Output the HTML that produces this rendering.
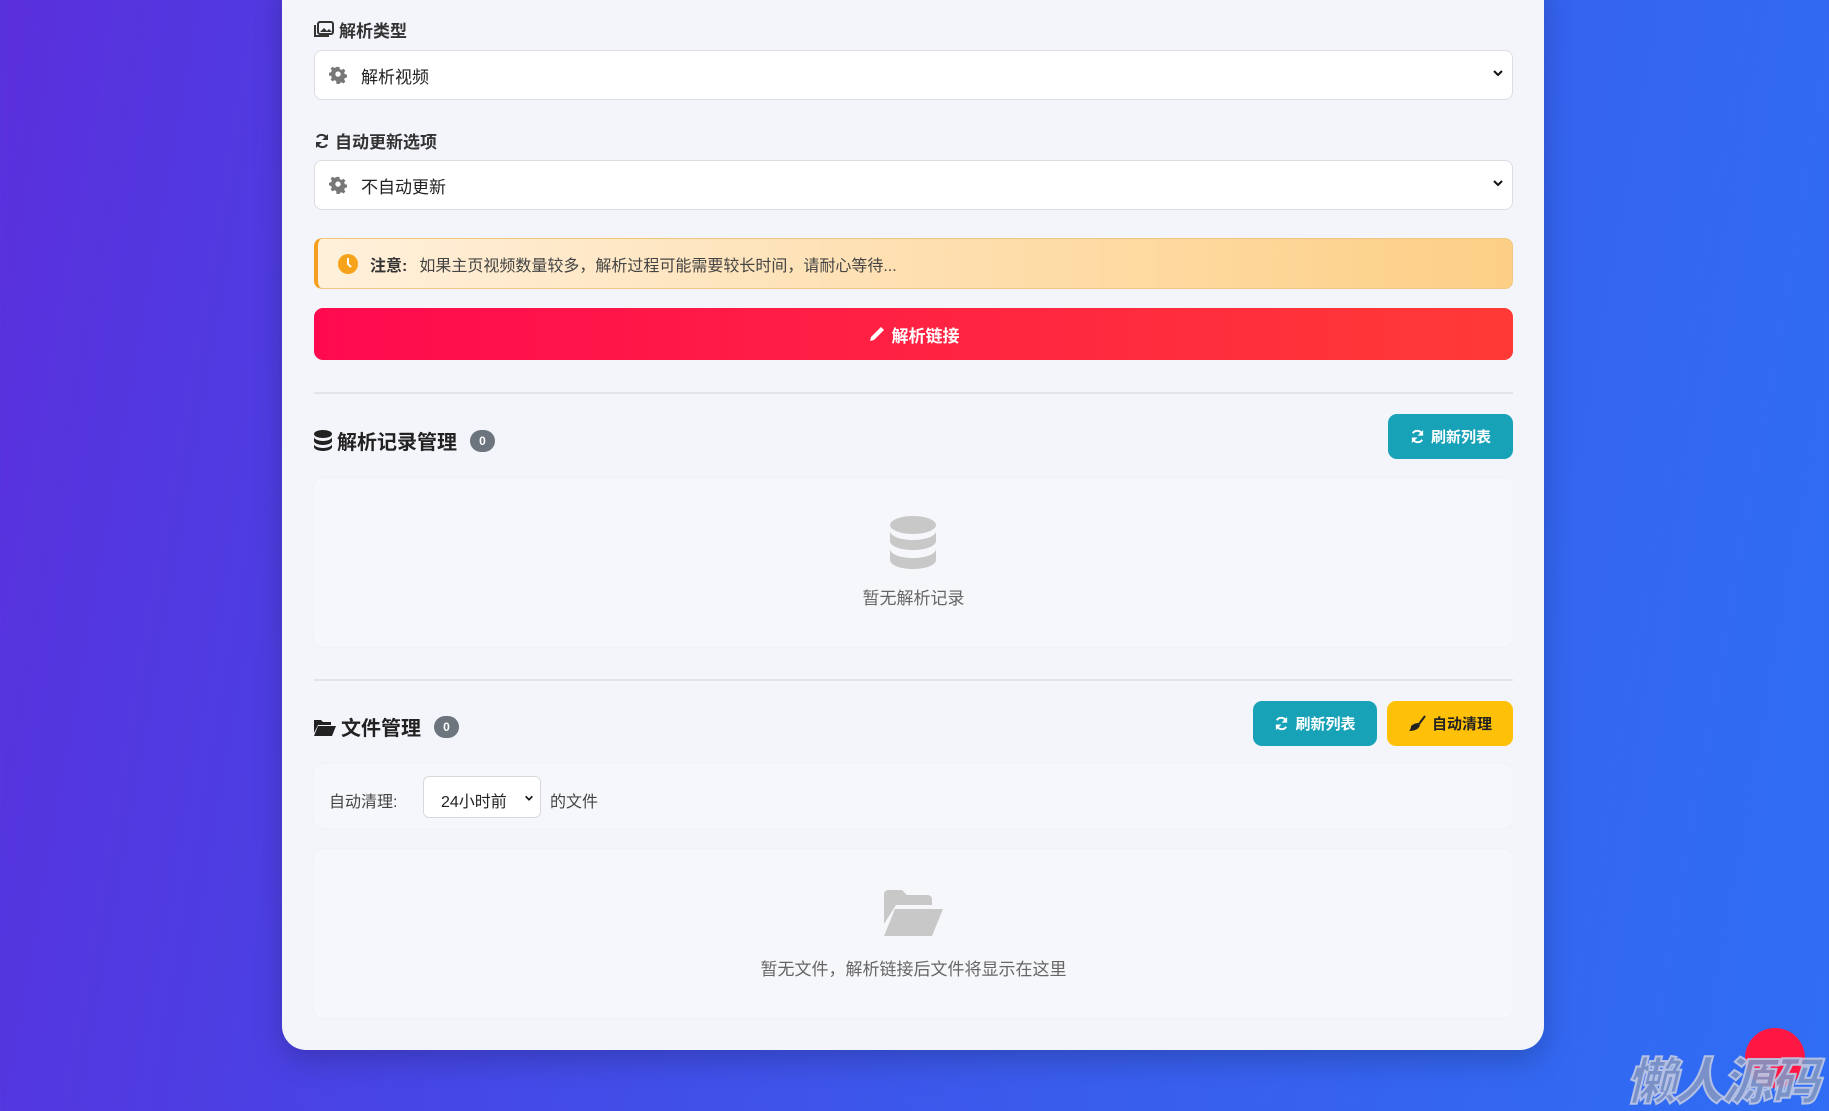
<!DOCTYPE html>
<html><head><meta charset="utf-8"><style>
*{box-sizing:border-box;margin:0;padding:0}
html,body{width:1829px;height:1111px;overflow:hidden}
body{font-family:"Liberation Sans","Noto Sans CJK SC",sans-serif;background:linear-gradient(100deg,#5a2fdc 0%,#4646e6 30%,#3a5bec 60%,#2f6ef4 100%);position:relative;color:#333}
.card{position:absolute;left:282px;top:-30px;width:1262px;height:1080px;background:#f4f5fb;border-radius:24px;box-shadow:0 10px 30px rgba(0,0,0,.2)}
.a{position:absolute}
.lbl{font-size:17px;font-weight:bold;color:#333;display:flex;align-items:center;gap:5px;left:314px}
.sel{left:314px;width:1199px;height:50px;background:#fff;border:1px solid #dcdde3;border-radius:8px;display:flex;align-items:center;padding-left:14px;font-size:17px;color:#222}
.sel .chev{position:absolute;right:8px;top:16px}
.notice{left:314px;top:238px;width:1199px;height:51px;border-radius:8px;border:1px solid #f0c680;border-left:4px solid #f5a020;background:linear-gradient(90deg,#fff0db,#fdcf86);display:flex;align-items:center;padding-left:20px;font-size:16px;color:#444}
.btn{left:314px;top:308px;width:1199px;height:52px;border-radius:9px;background:linear-gradient(90deg,#ff0a4f,#ff3a36);color:#fff;font-weight:bold;font-size:17px;display:flex;align-items:center;justify-content:center;gap:6px}
.hr{left:314px;width:1199px;height:2px;background:#e3e4ea}
.h{left:314px;font-size:20px;font-weight:bold;color:#222;display:flex;align-items:center;gap:5px}
.badge{display:inline-block;background:#6c757d;color:#fff;font-size:12px;border-radius:12px;width:25px;height:22px;text-align:center;line-height:22px;margin-left:8px}
.b2{height:45px;border-radius:9px;display:flex;align-items:center;justify-content:center;gap:6px;font-size:15px;font-weight:bold}
.teal{background:#17a2b8;color:#fff}
.yel{background:#ffc107;color:#222}
.box{left:314px;width:1199px;background:#f6f7fb;border-radius:10px;box-shadow:0 0 4px rgba(0,0,0,.03)}
.empty{text-align:center;color:#666;font-size:17px}
</style></head><body>
<div class="card"></div>

<div class="a lbl" style="top:17px"><svg width="20" height="17" viewBox="0 0 20 17"><rect x="4" y="1" width="15" height="12" rx="2" fill="none" stroke="#333" stroke-width="2"/><path d="M1 4v11h14" fill="none" stroke="#333" stroke-width="2"/><path d="M6 11l4-4 3 3 2-2 3 3z" fill="#333"/></svg>解析类型</div>
<div class="a sel" style="top:50px"><svg width="18" height="18" viewBox="0 0 20 20"><path fill="#777" d="M8.5 1h3l.5 2.5 2 .9 2.1-1.4 2.1 2.1-1.4 2.1.9 2 2.5.5v3l-2.5.5-.9 2 1.4 2.1-2.1 2.1-2.1-1.4-2 .9-.5 2.5h-3L8 16.6 6 15.7l-2.1 1.4-2.1-2.1L3.2 13l-.9-2L0 10.5v-3L2.3 7l.9-2L1.8 2.9 3.9.8 6 2.2 8 1.3z"/><circle cx="10" cy="9" r="3" fill="#fff"/></svg><span style="margin-left:14px">解析视频</span><svg class="chev" width="12" height="12" viewBox="0 0 12 12"><path d="M2 4l4 4 4-4" stroke="#111" stroke-width="2" fill="none"/></svg></div>

<div class="a lbl" style="top:128px"><svg width="16" height="16" viewBox="0 0 16 16"><path d="M13 6a5.5 5.5 0 0 0-10-1.5M3 10a5.5 5.5 0 0 0 10 1.5" stroke="#333" stroke-width="2" fill="none"/><path d="M14 1v6H8zM2 15V9h6z" fill="#333"/></svg>自动更新选项</div>
<div class="a sel" style="top:160px"><svg width="18" height="18" viewBox="0 0 20 20"><path fill="#777" d="M8.5 1h3l.5 2.5 2 .9 2.1-1.4 2.1 2.1-1.4 2.1.9 2 2.5.5v3l-2.5.5-.9 2 1.4 2.1-2.1 2.1-2.1-1.4-2 .9-.5 2.5h-3L8 16.6 6 15.7l-2.1 1.4-2.1-2.1L3.2 13l-.9-2L0 10.5v-3L2.3 7l.9-2L1.8 2.9 3.9.8 6 2.2 8 1.3z"/><circle cx="10" cy="9" r="3" fill="#fff"/></svg><span style="margin-left:14px">不自动更新</span><svg class="chev" width="12" height="12" viewBox="0 0 12 12"><path d="M2 4l4 4 4-4" stroke="#111" stroke-width="2" fill="none"/></svg></div>

<div class="a notice"><svg width="20" height="20" viewBox="0 0 20 20"><circle cx="10" cy="10" r="10" fill="#f7a21b"/><path d="M10 4v6l3 3" stroke="#fff" stroke-width="2" fill="none"/></svg><b style="margin-left:12px;color:#333">注意:</b><span style="margin-left:12px">如果主页视频数量较多，解析过程可能需要较长时间，请耐心等待...</span></div>

<div class="a btn"><svg width="18" height="18" viewBox="0 0 18 18"><path d="M2 16l1-4L13 2l3 3L6 15z" fill="#fff"/></svg>解析链接</div>

<div class="a hr" style="top:392px"></div>
<div class="a h" style="top:426px"><svg width="18" height="21" viewBox="0 0 18 21"><ellipse cx="9" cy="4" rx="9" ry="4" fill="#222"/><path d="M0 7c0 2 4 4 9 4s9-2 9-4v4c0 2-4 4-9 4s-9-2-9-4zM0 14c0 2 4 4 9 4s9-2 9-4v3c0 2-4 4-9 4s-9-2-9-4z" fill="#222"/></svg>解析记录管理<span class="badge">0</span></div>
<div class="a b2 teal" style="left:1388px;top:414px;width:125px"><svg width="15" height="15" viewBox="0 0 16 16"><path d="M13 6a5.5 5.5 0 0 0-10-1.5M3 10a5.5 5.5 0 0 0 10 1.5" stroke="#fff" stroke-width="2" fill="none"/><path d="M14 1v6H8zM2 15V9h6z" fill="#fff"/></svg>刷新列表</div>

<div class="a box" style="top:478px;height:169px"></div>
<div class="a" style="left:890px;top:516px"><svg width="46" height="54" viewBox="0 0 46 54"><ellipse cx="23" cy="9" rx="23" ry="9" fill="#c8c8c8"/><path d="M0 15c0 5 10 9 23 9s23-4 23-9v10c0 5-10 9-23 9S0 30 0 25zM0 33c0 5 10 9 23 9s23-4 23-9v11c0 5-10 9-23 9S0 49 0 44z" fill="#c8c8c8"/></svg></div>
<div class="a empty" style="left:314px;width:1199px;top:584px">暂无解析记录</div>

<div class="a hr" style="top:679px"></div>
<div class="a h" style="top:712px"><svg width="22" height="18" viewBox="0 0 22 18"><path d="M0 2h7l2 2h8v3H4L0 15z" fill="#222"/><path d="M4 8h18l-4 10H0z" fill="#222"/></svg>文件管理<span class="badge">0</span></div>
<div class="a b2 teal" style="left:1253px;top:701px;width:124px"><svg width="15" height="15" viewBox="0 0 16 16"><path d="M13 6a5.5 5.5 0 0 0-10-1.5M3 10a5.5 5.5 0 0 0 10 1.5" stroke="#fff" stroke-width="2" fill="none"/><path d="M14 1v6H8zM2 15V9h6z" fill="#fff"/></svg>刷新列表</div>
<div class="a b2 yel" style="left:1387px;top:701px;width:126px;font-weight:bold"><svg width="18" height="17" viewBox="0 0 18 17"><path d="M17 1l-6 8" stroke="#222" stroke-width="2"/><path d="M10 8l2 2c-1 4-5 6-11 6 1-1 2-3 2-5 2-2 5-3 7-3z" fill="#222"/></svg>自动清理</div>

<div class="a box" style="top:764px;height:64px"></div>
<div class="a" style="left:329px;top:788px;font-size:16px;color:#444">自动清理:</div>
<div class="a" style="left:423px;top:776px;width:118px;height:42px;background:#fff;border:1px solid #d8d9de;border-radius:6px;font-size:16px;color:#222;padding:11px 0 0 17px">24小时前<svg style="position:absolute;right:6px;top:16px" width="10" height="10" viewBox="0 0 12 12"><path d="M2 4l4 4 4-4" stroke="#111" stroke-width="2" fill="none"/></svg></div>
<div class="a" style="left:550px;top:788px;font-size:16px;color:#444">的文件</div>

<div class="a box" style="top:849px;height:169px"></div>
<div class="a" style="left:884px;top:890px"><svg width="59" height="46" viewBox="0 0 59 46"><path d="M0 4c0-2 2-4 4-4h14l5 5h21c2 0 4 2 4 4v6H12L0 34z" fill="#c8c8c8"/><path d="M11 19h48L48 46H0z" fill="#c8c8c8"/></svg></div>
<div class="a empty" style="left:314px;width:1199px;top:955px">暂无文件，解析链接后文件将显示在这里</div>

<div class="a" style="left:1745px;top:1028px;width:60px;height:60px;border-radius:50%;background:#ff1744"></div>
<div class="a" style="left:1626px;top:1042px;font-size:50px;font-weight:900;font-style:italic;color:rgba(130,150,195,.9);-webkit-text-stroke:2px rgba(190,200,230,.9);font-family:'Noto Sans CJK SC',sans-serif;letter-spacing:-2px">懒人源码</div>
</body></html>
